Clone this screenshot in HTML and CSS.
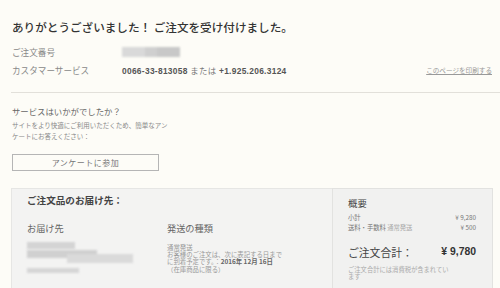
FILE: index.html
```html
<!DOCTYPE html>
<html lang="ja">
<head>
    <meta charset="UTF-8">
    <meta name="viewport" content="width=device-width, initial-scale=1.0">
    <title>ご注文を受け付けました</title>
    <link rel="stylesheet" href="styles.css">
</head>
<body>

<main class="page">
    <h1 class="title">ありがとうございました！ ご注文を受け付けました。</h1>

    <div class="info">
        <div class="info-row">
            <span class="info-label">ご注文番号</span>
            <span class="blur blur-order"></span>
        </div>
        <div class="info-row">
            <span class="info-label">カスタマーサービス</span>
            <span class="phone">0066-33-813058 <span class="or">または</span> +1.925.206.3124</span>
            <a class="print" href="#">このページを印刷する</a>
        </div>
    </div>

    <hr class="divider">

    <section class="survey">
        <h2>サービスはいかがでしたか？</h2>
        <p>サイトをより快適にご利用いただくため、簡単なアン<br>ケートにお答えください：</p>
        <button type="button" class="survey-btn">アンケートに参加</button>
    </section>

    <section class="details">
        <div class="delivery">
            <h3>ご注文品のお届け先：</h3>
            <div class="delivery-cols">
                <div class="col-address">
                    <h4>お届け先</h4>
                    <div class="address">
                        <span class="blur a1"></span>
                        <span class="blur a2"></span>
                        <span class="blur a3"></span>
                        <span class="blur a4"></span>
                    </div>
                </div>
                <div class="col-ship">
                    <h4>発送の種類</h4>
                    <p>通常発送<br>お客様のご注文は、次に表記する日まで<br>に到着予定です。：<b>2016年 12月 16日</b><br>（在庫商品に限る）</p>
                </div>
            </div>
        </div>

        <aside class="summary">
            <h3>概要</h3>
            <div class="sum-row"><span>小計</span><span>¥ 9,280</span></div>
            <div class="sum-row"><span>送料・手数料 <span class="muted">通常発送</span></span><span>¥ 500</span></div>
            <div class="sum-total"><span>ご注文合計：</span><b>¥ 9,780</b></div>
            <p class="tax">ご注文合計には消費税が含まれてい<br>ます</p>
        </aside>
    </section>
</main>

</body>
</html>
```

FILE: styles.css
```css
body {
    margin: 0;
    padding: 0;
    background: #fdfcf7;
    color: #444;
    font-family: "Noto Sans CJK JP", "Noto Sans", sans-serif;
    overflow: hidden;
}

.page {
    padding-top: 18px;
}

.title {
    margin: 0 0 0 12px;
    font-size: 11.6px;
    line-height: 18px;
    font-weight: 500;
    color: #333;
}

.info {
    margin: 7px 0 0 12px;
}

.info-row {
    display: flex;
    align-items: center;
    height: 18px;
    line-height: 18px;
}

.info-label {
    width: 110px;
    font-size: 8.6px;
    color: #888;
}

.blur {
    display: block;
    background: #d4d4d4;
    filter: blur(1px);
}

.blur-order {
    width: 58px;
    height: 10px;
    background: linear-gradient(90deg, #d9d9d9 0 40%, #cfcfcf 40% 60%, #c8c8c8 60%);
}

.phone {
    font-family: "Liberation Sans", Arial, sans-serif;
    font-size: 8.4px;
    font-weight: bold;
    color: #555;
    letter-spacing: 0.3px;
}

.phone .or {
    font-family: "Noto Sans CJK JP", sans-serif;
    font-weight: normal;
    color: #777;
}

.print {
    margin-left: auto;
    margin-right: 8px;
    font-size: 6.6px;
    color: #999;
}

.divider {
    margin: 13px 0 0 11px;
    border: none;
    border-top: 1px solid #e2e0da;
}

.survey {
    margin-left: 12px;
}

.survey h2 {
    margin: 12px 0 0;
    font-size: 8.4px;
    line-height: 12px;
    font-weight: normal;
    color: #666;
}

.survey p {
    margin: 3px 0 0;
    font-size: 6.5px;
    line-height: 11px;
    color: #888;
}

.survey-btn {
    display: block;
    margin-top: 12px;
    width: 147px;
    height: 17px;
    padding: 0;
    border: 1px solid #b5b5b5;
    background: #fdfcf7;
    font-family: "Noto Sans CJK JP", sans-serif;
    font-size: 8px;
    color: #777;
    letter-spacing: 0.5px;
}

.details {
    display: flex;
    margin: 17px 7px 0 11px;
    height: 110px;
}

.delivery {
    width: 321px;
    padding: 4px 0 0 15px;
    box-sizing: border-box;
    background: #f3f3f2;
    border: 1px solid #e6e6e4;
    border-right: none;
}

.delivery h3 {
    margin: 0;
    font-size: 9.6px;
    line-height: 14px;
    font-weight: bold;
    color: #444;
}

.delivery-cols {
    display: flex;
    margin-top: 14px;
}

.delivery h4 {
    margin: 0;
    font-size: 9.2px;
    line-height: 14px;
    font-weight: normal;
    color: #666;
}

.col-address {
    width: 140px;
}

.address {
    position: relative;
    height: 40px;
    margin-top: 7px;
}

.address .blur {
    position: absolute;
    left: 0;
}

.a1 { top: 0; width: 48px; height: 7px; }
.a2 { top: 8px; width: 70px; height: 8px; background: #d0d0d0; }
.a3 { top: 12px; left: 40px !important; width: 66px; height: 9px; background: #dadada; }
.a4 { top: 26px; width: 52px; height: 5px; background: #d6d6d6; }

.col-ship p {
    margin: 9px 0 0;
    font-size: 6.4px;
    line-height: 7.2px;
    color: #999;
}

.col-ship b {
    color: #666;
}

.summary {
    width: 161px;
    padding: 7px 16px 0 15px;
    box-sizing: border-box;
    background: #f1f1f0;
    border: 1px solid #e2e2e0;
}

.summary h3 {
    margin: 0;
    font-size: 9.4px;
    line-height: 14px;
    font-weight: normal;
    color: #444;
}

.sum-row {
    display: flex;
    justify-content: space-between;
    font-size: 6.3px;
    line-height: 10px;
    color: #777;
}

.summary h3 + .sum-row {
    margin-top: 3px;
}

.muted {
    color: #aaa;
}

.sum-total {
    display: flex;
    justify-content: space-between;
    align-items: center;
    margin-top: 11px;
    line-height: 16px;
    font-size: 10.8px;
    color: #444;
}

.sum-total b {
    font-family: "Liberation Sans", Arial, sans-serif;
    font-size: 10.4px;
    color: #333;
}

.tax {
    margin: 6px 0 0;
    font-size: 6.3px;
    line-height: 7px;
    color: #aaa;
}
```
